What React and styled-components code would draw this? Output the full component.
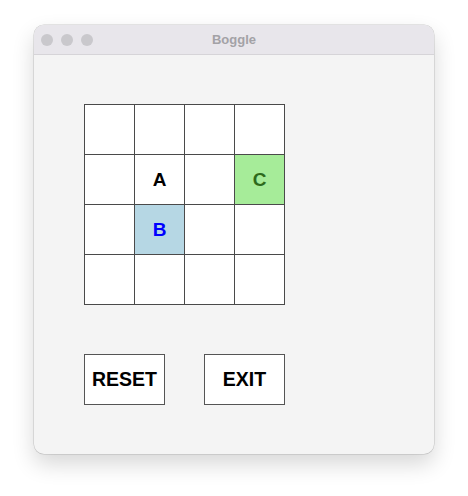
import styled, { createGlobalStyle } from 'styled-components';

const GlobalStyle = createGlobalStyle`
  html, body {
    margin: 0;
    padding: 0;
    background: #ffffff;
  }
`;

const cells = [
  ['', '', '', ''],
  ['', 'A', '', 'C'],
  ['', 'B', '', ''],
  ['', '', '', ''],
];

const tones = {
  A: { bg: '#ffffff', fg: '#000000' },
  B: { bg: '#b6d7e4', fg: '#0000ff' },
  C: { bg: '#a6ec99', fg: '#2d6a1b' },
};

const App = () => {
  return (
    <Page>
      <GlobalStyle />
      <Window>
        <TitleBar>
          <Lights>
            <Light />
            <Light />
            <Light />
          </Lights>
          <Title>Boggle</Title>
        </TitleBar>
        <Content>
          <Board>
            {cells.flat().map((letter, i) => (
              <Cell
                key={i}
                $bg={letter ? tones[letter].bg : '#ffffff'}
                $fg={letter ? tones[letter].fg : '#000000'}
              >
                {letter}
              </Cell>
            ))}
          </Board>
          <Buttons>
            <Button>RESET</Button>
            <Button>EXIT</Button>
          </Buttons>
        </Content>
      </Window>
    </Page>
  );
};

const Page = styled.div`
  padding: 25px 0 0 34px;
  height: 496px;
  box-sizing: border-box;
`;

const Window = styled.div`
  width: 400px;
  height: 429px;
  background: #f4f4f4;
  border-radius: 10px;
  overflow: hidden;
  box-shadow: 0 0 0 0.5px rgba(0, 0, 0, 0.18), 0 10px 22px rgba(0, 0, 0, 0.16);
  display: flex;
  flex-direction: column;
`;

const TitleBar = styled.div`
  position: relative;
  height: 29px;
  background: #e8e6eb;
  border-bottom: 1px solid #d6d4d8;
  display: flex;
  align-items: center;
  justify-content: center;
`;

const Lights = styled.div`
  position: absolute;
  left: 7px;
  top: 9px;
  display: flex;
  gap: 8px;
`;

const Light = styled.span`
  width: 12px;
  height: 12px;
  border-radius: 50%;
  background: #c9c8cc;
`;

const Title = styled.span`
  font-family: 'Liberation Sans', Arial, sans-serif;
  font-weight: bold;
  font-size: 13px;
  color: #a3a2a6;
`;

const Content = styled.div`
  padding: 49px 0 0 50px;
  display: flex;
  flex-direction: column;
  gap: 49px;
`;

const Board = styled.div`
  display: grid;
  grid-template-columns: repeat(4, 50px);
  grid-auto-rows: 50px;
  width: 201px;
  box-sizing: border-box;
  border-left: 1px solid #4a4a4a;
  border-top: 1px solid #4a4a4a;
`;

const Cell = styled.div`
  border-right: 1px solid #4a4a4a;
  border-bottom: 1px solid #4a4a4a;
  background: ${(p) => p.$bg};
  color: ${(p) => p.$fg};
  display: flex;
  align-items: center;
  justify-content: center;
  font-family: 'Liberation Sans', Arial, sans-serif;
  font-weight: bold;
  font-size: 19px;
`;

const Buttons = styled.div`
  display: flex;
  gap: 39px;
`;

const Button = styled.div`
  width: 81px;
  height: 51px;
  box-sizing: border-box;
  border: 1px solid #555555;
  background: #ffffff;
  display: flex;
  align-items: center;
  justify-content: center;
  font-family: 'Liberation Sans', Arial, sans-serif;
  font-weight: bold;
  font-size: 19.5px;
  color: #000000;
`;

export default App;
